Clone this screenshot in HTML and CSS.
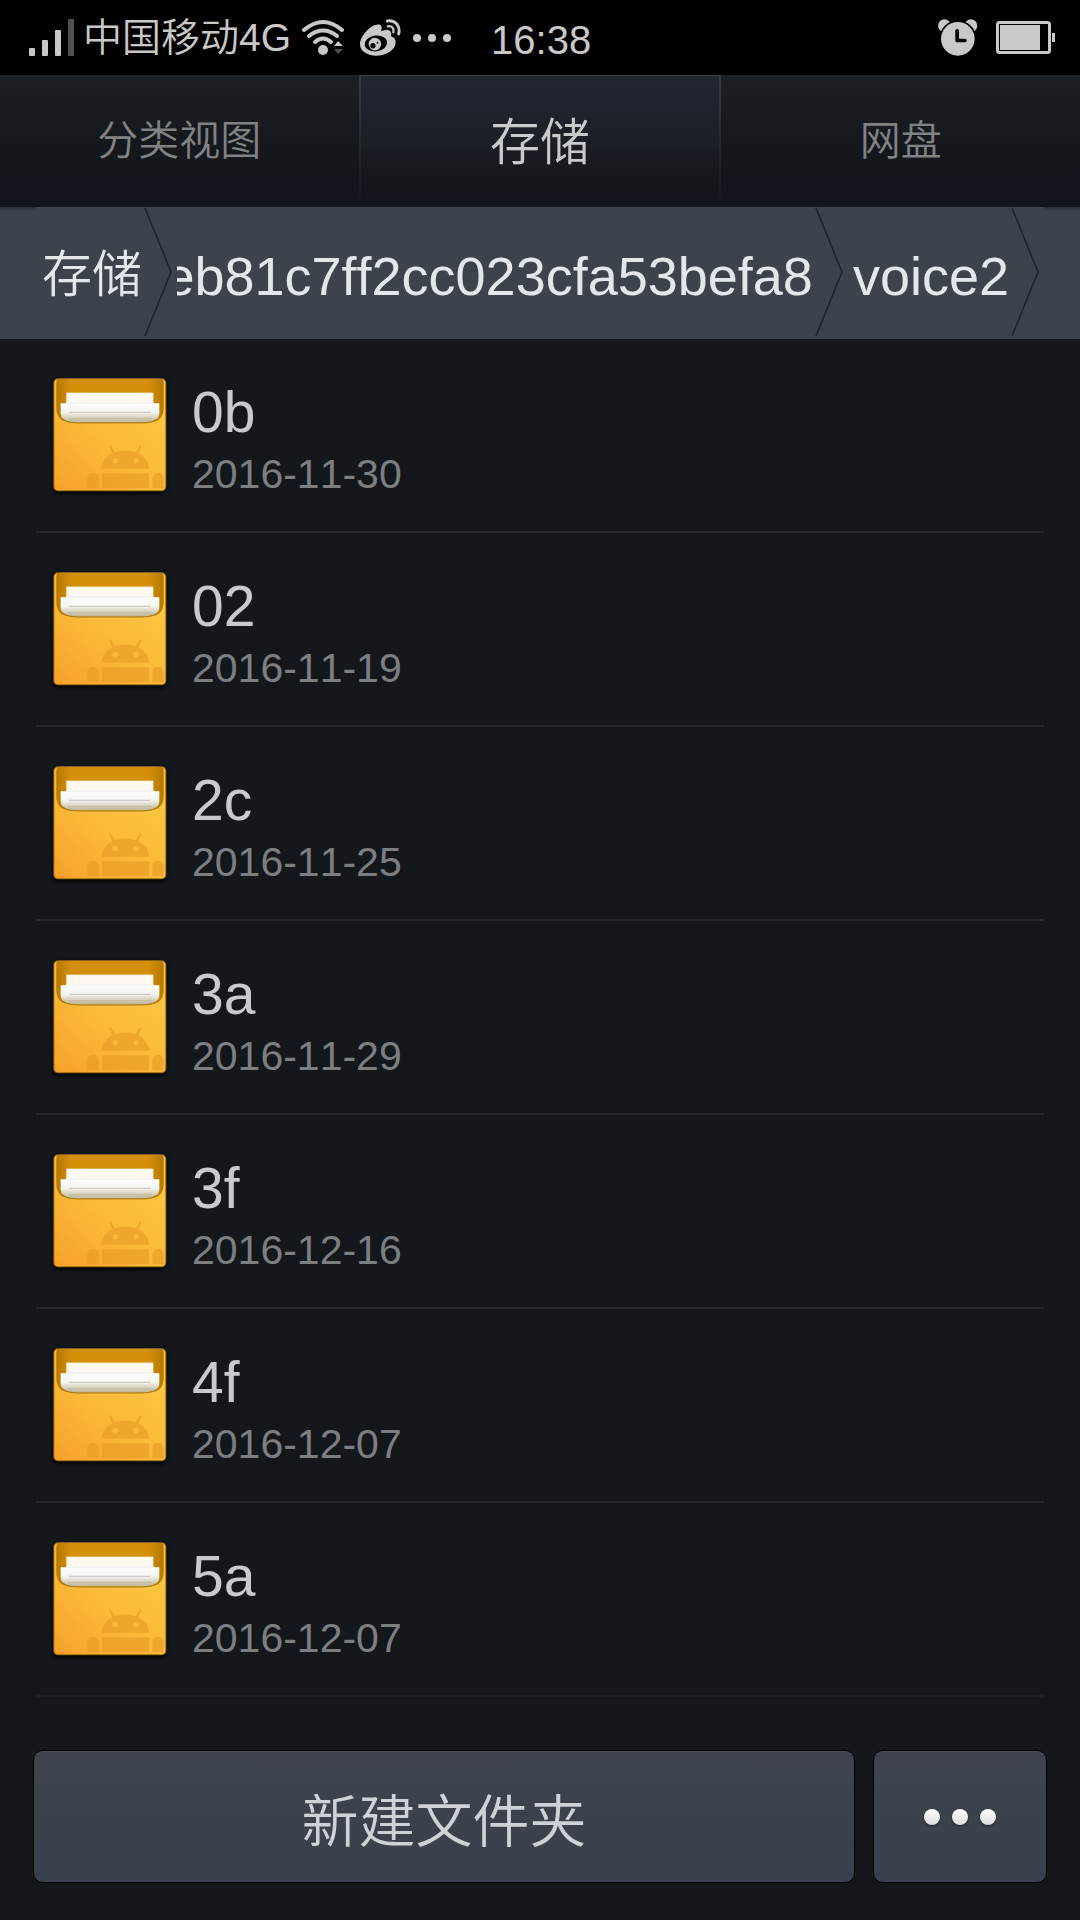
FILE: index.html
```html
<!DOCTYPE html>
<html lang="zh-CN">
<head>
  <meta charset="UTF-8" />
  <meta name="viewport" content="width=device-width, initial-scale=1.0"/>
  <title>存储</title>
  <link rel="stylesheet" href="styles.css">
</head>
<body>

  <!-- Shared icons -->
  <svg class="icon-defs" width="0" height="0" aria-hidden="true">
    <defs>
      <linearGradient id="folderBody" x1="0" y1="1" x2="0.8" y2="0.1">
        <stop offset="0" stop-color="#f7a02c"/>
        <stop offset="0.5" stop-color="#fbb938"/>
        <stop offset="1" stop-color="#fec640"/>
      </linearGradient>
      <linearGradient id="folderHole" x1="0" y1="0" x2="1" y2="0">
        <stop offset="0" stop-color="#b57800"/>
        <stop offset="0.14" stop-color="#d38f09"/>
        <stop offset="0.86" stop-color="#d38f09"/>
        <stop offset="1" stop-color="#b57800"/>
      </linearGradient>
      <linearGradient id="folderPaper" x1="0" y1="0" x2="0" y2="1">
        <stop offset="0" stop-color="#ffffff"/>
        <stop offset="0.5" stop-color="#f4f3ee"/>
        <stop offset="1" stop-color="#bdb593"/>
      </linearGradient>
    </defs>
    <symbol id="folder" viewBox="38 38 342 342">
      <rect x="39" y="39" width="339" height="339" rx="14" fill="#8f6714"/>
      <rect x="42" y="42" width="333" height="333" rx="12" fill="url(#folderBody)"/>
      <path d="M48 50q0-10 12-10h298q12 0 12 10v76q0 46-46 46H94q-46 0-46-46z" fill="url(#folderHole)"/>
      <rect x="78" y="82" width="261" height="40" fill="#fff8ee"/>
      <path d="M61 114h17v-3h261v3h18v30q0 27-50 27H111q-50 0-50-27z" fill="url(#folderPaper)"/>
      <path d="M78 113h261" stroke="#e3e3e6" stroke-width="2"/>
      <path d="M86 141h244" stroke="#cfccc6" stroke-width="4"/>
      <path d="M84 160h250" stroke="#c2bb9e" stroke-width="3"/>
      <path d="M66 160q14 13 48 13h190q34 0 48-13" fill="none" stroke="#a37c24" stroke-width="3"/>
      <g fill="#e69a25" fill-opacity="0.6">
        <path d="M183 310q3-30 33-47l-10-20 5-3 13 21q31-11 62 0l13-21 5 3-11 20q31 17 34 47z"/>
        <path d="M185 324h141v45H185z"/>
        <path d="M141 369v-29q0-17 17-17t17 17v29z"/>
        <path d="M336 369v-29q0-17 17-17t17 17v29z"/>
      </g>
      <circle cx="225" cy="286" r="8" fill="#fbba3b"/>
      <circle cx="287" cy="286" r="8" fill="#fbba3b"/>
    </symbol>
    <symbol id="chevron" viewBox="0 0 28 132">
      <path d="M1 1l26 64-26 64" fill="none" stroke="#1b232c" stroke-width="1.500"/>
    </symbol>
  </svg>

  <!-- Status bar -->
  <header class="status">
    <svg class="signal" viewBox="0 0 46 38" aria-hidden="true">
      <rect x="0" y="29" width="6" height="8" rx="1"/>
      <rect x="13" y="21" width="6" height="16" rx="1"/>
      <rect x="26" y="11" width="6" height="26" rx="1"/>
      <rect x="39" y="0" width="6" height="37" fill="#505050"/>
    </svg>
    <span class="carrier">中国移动4G</span>
    <svg class="wifi" viewBox="0 0 44 38" aria-hidden="true">
      <g fill="none" stroke="#c8c8c8" stroke-width="4" stroke-linecap="round">
        <path d="M2 11q19-16 38 0"/>
        <path d="M7 17q14-11 28 0"/>
        <path d="M13 23q8-7 16 0"/>
      </g>
      <circle cx="21" cy="31" r="5"/>
      <path d="M32 27l4-5 5 5z"/>
      <path d="M32 30h9l-5 5z" fill="#505050"/>
    </svg>
    <svg class="weibo" viewBox="207 57 124 112" aria-hidden="true">
      <path d="M266 74c-22-6-58 32-59 58-1 24 26 36 48 36 30 0 60-17 60-41 0-11-8-16-15-18 3-9 1-18-8-19-7-1-14 2-21 4 2-8 3-17-5-20z"/>
      <ellipse cx="255" cy="131" rx="34" ry="24" fill="#000" transform="rotate(-8 255 131)"/>
      <circle cx="252" cy="133" r="19"/>
      <circle cx="246" cy="138" r="8" fill="#000"/>
      <circle cx="260" cy="129" r="3" fill="#000"/>
      <g fill="none" stroke="#c8c8c8" stroke-linecap="round">
        <path d="M290 63c24-4 40 16 34 39" stroke-width="9"/>
        <path d="M291 79c12-3 20 7 17 18" stroke-width="7"/>
      </g>
    </svg>
    <svg class="more-notices" viewBox="0 0 38 8" aria-hidden="true">
      <circle cx="4" cy="4" r="4"/>
      <circle cx="19" cy="4" r="4"/>
      <circle cx="34" cy="4" r="4"/>
    </svg>
    <time class="clock">16:38</time>
    <svg class="alarm" viewBox="117 56 119 110" aria-hidden="true">
      <circle cx="136" cy="76" r="19"/>
      <circle cx="215" cy="76" r="19"/>
      <circle cx="176" cy="115" r="55" fill="#000"/>
      <circle cx="176" cy="115" r="50"/>
      <path d="M174 91v29h23" fill="none" stroke="#000" stroke-width="11" stroke-linecap="round" stroke-linejoin="round"/>
    </svg>
    <svg class="battery" viewBox="0 0 60 34" aria-hidden="true">
      <rect x="1.500" y="1.500" width="52" height="30" rx="2" fill="none" stroke="#c8c8c8" stroke-width="3"/>
      <rect x="4" y="4" width="40" height="25"/>
      <rect x="56" y="12" width="3" height="9"/>
    </svg>
  </header>

  <!-- Tabs -->
  <nav class="tabs">
    <a class="tab" href="#category">分类视图</a>
    <a class="tab active" href="#storage">存储</a>
    <a class="tab" href="#cloud">网盘</a>
  </nav>

  <!-- Current path -->
  <nav class="path">
    <a class="crumb root" href="#storage">存储</a>
    <svg class="chevron" aria-hidden="true"><use href="#chevron"/></svg>
    <a class="crumb parent" href="#parent"><span>eb81c7ff2cc023cfa53befa8</span></a>
    <svg class="chevron" aria-hidden="true"><use href="#chevron"/></svg>
    <a class="crumb current" href="#voice2">voice2</a>
    <svg class="chevron last" aria-hidden="true"><use href="#chevron"/></svg>
  </nav>

  <!-- Folder list -->
  <main>
    <ul class="files">
      <li>
        <a class="file" href="#0b">
          <svg class="folder" aria-hidden="true"><use href="#folder"/></svg>
          <span class="info"><span class="name">0b</span><span class="date">2016-11-30</span></span>
        </a>
      </li>
      <li>
        <a class="file" href="#02">
          <svg class="folder" aria-hidden="true"><use href="#folder"/></svg>
          <span class="info"><span class="name">02</span><span class="date">2016-11-19</span></span>
        </a>
      </li>
      <li>
        <a class="file" href="#2c">
          <svg class="folder" aria-hidden="true"><use href="#folder"/></svg>
          <span class="info"><span class="name">2c</span><span class="date">2016-11-25</span></span>
        </a>
      </li>
      <li>
        <a class="file" href="#3a">
          <svg class="folder" aria-hidden="true"><use href="#folder"/></svg>
          <span class="info"><span class="name">3a</span><span class="date">2016-11-29</span></span>
        </a>
      </li>
      <li>
        <a class="file" href="#3f">
          <svg class="folder" aria-hidden="true"><use href="#folder"/></svg>
          <span class="info"><span class="name">3f</span><span class="date">2016-12-16</span></span>
        </a>
      </li>
      <li>
        <a class="file" href="#4f">
          <svg class="folder" aria-hidden="true"><use href="#folder"/></svg>
          <span class="info"><span class="name">4f</span><span class="date">2016-12-07</span></span>
        </a>
      </li>
      <li>
        <a class="file" href="#5a">
          <svg class="folder" aria-hidden="true"><use href="#folder"/></svg>
          <span class="info"><span class="name">5a</span><span class="date">2016-12-07</span></span>
        </a>
      </li>
    </ul>
  </main>

  <!-- Bottom buttons -->
  <footer class="actions">
    <button class="btn new-folder" type="button">新建文件夹</button>
    <button class="btn more" type="button" aria-label="更多">
      <span class="dot"></span>
      <span class="dot"></span>
      <span class="dot"></span>
    </button>
  </footer>

</body>
</html>
```
FILE: styles.css
```css
* {
  box-sizing: border-box;
}
body {
  margin: 0;
  min-height: 100vh;
  display: flex;
  flex-direction: column;
  background: #14171b;
  color: #c8cacd;
  font-family: 'Liberation Sans', 'Noto Sans CJK SC', sans-serif;
  font-weight: 350;
  font-kerning: none;
}
a {
  color: inherit;
  text-decoration: none;
}
svg {
  display: block;
  flex-shrink: 0;
}
.icon-defs {
  position: absolute;
}

/* Status bar */
.status {
  display: flex;
  align-items: center;
  height: 75px;
  padding: 0 24px 0 29px;
  background: #000;
  color: #c8c8c8;
  fill: #c8c8c8;
  font-size: 39px;
  line-height: 48px;
}
.signal {
  width: 46px;
  height: 38px;
}
.carrier {
  margin-left: 8px;
}
.wifi {
  width: 44px;
  height: 38px;
  margin-left: 11px;
}
.weibo {
  width: 41px;
  height: 37px;
  margin-left: 14px;
}
.more-notices {
  width: 38px;
  height: 8px;
  margin-left: 12px;
}
.clock {
  margin-left: 40px;
  padding-top: 4px;
  font-size: 40px;
}
.alarm {
  width: 40px;
  height: 37px;
  margin-left: auto;
}
.battery {
  width: 60px;
  height: 34px;
  margin-left: 18px;
}

/* Tabs */
.tabs {
  display: flex;
  height: 132px;
  background: linear-gradient(#1c2024, #14171b 60%, #12151d);
}
.tab {
  flex: 1;
  display: flex;
  justify-content: center;
  align-items: center;
  padding-bottom: 8px;
  color: #808284;
  font-size: 41px;
}
.tab.active {
  color: #c8cacc;
  font-size: 50px;
  border-style: solid;
  border-width: 1px 2px 0;
  border-image: linear-gradient(#3a3d42, #14171b 95%) 1;
  background: linear-gradient(#232730, #1b1f26 50%, #14171b 80%, #12151d);
}

/* Current path */
.path {
  display: flex;
  align-items: center;
  height: 132px;
  background:
    linear-gradient(#2a3037, #3c434b) 0 0 / 36px 4px no-repeat,
    linear-gradient(#2a3037, #3c434b) 100% 0 / 36px 4px no-repeat,
    #3c434b;
  color: #e4e7ea;
  font-size: 54px;
}
.crumb {
  padding-top: 6px;
  white-space: nowrap;
}
.crumb.root {
  padding: 0 2px 6px 42px;
  font-size: 50px;
}
.crumb.parent {
  flex: 1;
  display: flex;
  justify-content: flex-end;
  min-width: 0;
  margin-left: 5px;
  padding-right: 2px;
  overflow: hidden;
}
.crumb.current {
  padding-left: 10px;
  padding-right: 2px;
}
.chevron {
  width: 28px;
  height: 132px;
}
.chevron.last {
  margin-right: 41px;
}

/* Folder list */
.files {
  list-style: none;
  margin: 0;
  padding: 0 36px;
}
.file {
  display: flex;
  align-items: center;
  height: 194px;
  padding-left: 17px;
  border-bottom: 2px solid #24272b;
}
.files li:last-child .file {
  border-bottom-color: #1c2024;
}
.folder {
  width: 114px;
  height: 114px;
  filter: drop-shadow(0 2px 2px #000);
}
.info {
  display: flex;
  flex-direction: column;
  margin-left: 25px;
  padding-top: 12px;
}
.name {
  font-size: 57px;
  line-height: 66px;
}
.date {
  color: #7c7e82;
  font-size: 41px;
  line-height: 58px;
}

/* Bottom buttons */
.actions {
  display: flex;
  gap: 18px;
  margin-top: auto;
  padding: 0 33px 37px;
}
.btn {
  display: flex;
  justify-content: center;
  align-items: center;
  height: 133px;
  padding: 0;
  border: 1px solid #000;
  border-radius: 10px;
  background: linear-gradient(#3f444f, #3b424b 50%, #39404e);
  box-shadow: inset 0 1px 0 #4b505a;
  color: #ced1d6;
  font-family: inherit;
  font-size: 57px;
  font-weight: inherit;
  cursor: pointer;
}
.new-folder {
  flex: 1;
}
.more {
  gap: 12px;
  width: 174px;
}
.dot {
  width: 16px;
  height: 16px;
  border-radius: 50%;
  background: linear-gradient(#fff, #dcdcdc);
  box-shadow: 0 1px 2px #1c2024;
}
```
